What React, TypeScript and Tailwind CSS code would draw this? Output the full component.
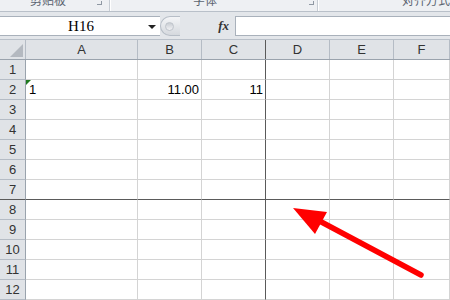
import React from "react";

const cols = [
  { label: "A", w: "w-[112px]" },
  { label: "B", w: "w-[64px]" },
  { label: "C", w: "w-[64px]" },
  { label: "D", w: "w-[64px]" },
  { label: "E", w: "w-[64px]" },
  { label: "F", w: "flex-1" },
];

const hdrFont = { fontFamily: '"Liberation Sans", Arial, sans-serif' };

function Cell({ ci, ri, children }: { ci: number; ri: number; children?: React.ReactNode }) {
  const c = cols[ci];
  const right = ci === 2 ? "border-r-[#5a5a5a]" : "border-r-[#d4d4d4]";
  const bottom = ri === 7 ? "border-b-[#5a5a5a]" : "border-b-[#d4d4d4]";
  return (
    <div className={`${c.w} h-full shrink-0 border-r border-b ${right} ${bottom} relative flex items-center`}>
      {children}
    </div>
  );
}

export default function App() {
  const rows = Array.from({ length: 12 }, (_, i) => i + 1);
  return (
    <div className="relative w-[450px] h-[300px] overflow-hidden bg-white select-none" style={hdrFont}>
      {/* ribbon strip */}
      <div className="h-[12px] flex bg-[#eef0f3] border-b border-[#b9c0c9] overflow-hidden text-[12px] text-[#5b6470]" style={{ fontFamily: '"Noto Sans CJK SC", sans-serif' }}>
        <div className="w-[110px] relative flex">
          <span className="ml-[30px] -mt-[8px] leading-[16px]">剪贴板</span>
          <span className="absolute left-[97px] top-[1px] w-[5px] h-[4px] border-r border-b border-[#8f98a3]" />
        </div>
        <div className="w-px bg-[#c6ccd3]" />
        <div className="w-px bg-white" />
        <div className="w-[208px] relative flex">
          <span className="ml-[82px] -mt-[8px] leading-[16px]">字体</span>
          <span className="absolute left-[198px] top-[1px] w-[5px] h-[4px] border-r border-b border-[#8f98a3]" />
        </div>
        <div className="w-px bg-[#c6ccd3]" />
        <div className="w-px bg-white" />
        <div className="flex-1 flex">
          <span className="ml-[83px] -mt-[8px] leading-[16px] whitespace-nowrap">对齐方式</span>
        </div>
      </div>

      {/* formula bar */}
      <div className="h-[27px] bg-[#e3e6ea] flex items-start pt-[4px]">
        <div className="w-[160px] h-[20px] bg-white border-t border-b border-[#a9b1bb] flex items-center relative">
          <span className="flex-1 text-center text-[15px] leading-none text-black pl-[2px]" style={{ fontFamily: '"Liberation Serif", "Times New Roman", serif' }}>H16</span>
          <span className="absolute left-[148px] top-[8px] w-0 h-0 border-l-[4px] border-r-[4px] border-t-[4px] border-l-transparent border-r-transparent border-t-[#222]" />
        </div>
        <div className="w-[20px] h-[20px] rounded-l-full bg-gradient-to-b from-[#f4f5f7] to-[#d5d9de] border border-r-0 border-[#b7bec7] flex items-center pl-[4px]">
          <span className="w-[9px] h-[9px] rounded-full bg-gradient-to-b from-[#c9cdd3] to-[#f2f3f5] border border-[#bfc4cb]" />
        </div>
        <div className="w-[55px] h-[20px] flex items-center justify-end pr-[6px]">
          <span className="italic font-bold text-[13px] text-[#333]" style={{ fontFamily: '"Liberation Serif", serif' }}>fx</span>
        </div>
        <div className="w-px h-[20px] bg-[#a9b1bb]" />
        <div className="flex-1 h-[20px] bg-white border-t border-b border-[#a9b1bb]" />
      </div>

      {/* column header */}
      <div className="h-[21px] flex bg-[#e0e3e7] border-t border-b border-t-[#b9c0c9] border-b-[#9aa3ad] text-[13px] text-[#333]">
        <div className="w-[26px] h-full border-r border-[#b5bcc5] relative">
          <svg className="absolute right-[2px] bottom-[2px]" width="13" height="13"><polygon points="13,0 13,13 0,13" fill="#b4b9c0" /></svg>
        </div>
        {cols.map((c, i) => (
          <div key={c.label} className={`${c.w} shrink-0 h-full flex items-center justify-center border-r ${i === 2 ? "border-[#5a5a5a]" : "border-[#b5bcc5]"}`}>
            {c.label}
          </div>
        ))}
      </div>

      {/* rows */}
      {rows.map((r) => (
        <div key={r} className="h-[20px] flex text-[13px]">
          <div className={`w-[26px] h-full shrink-0 bg-[#e0e3e7] border-r border-b border-r-[#9aa3ad] ${r === 7 ? "border-b-[#5a5a5a]" : "border-b-[#b5bcc5]"} flex items-center justify-center text-[#333]`}>
            {r}
          </div>
          {cols.map((_, ci) => (
            <Cell key={ci} ci={ci} ri={r}>
              {r === 2 && ci === 0 && (
                <>
                  <svg className="absolute left-0 top-0" width="5" height="5"><polygon points="0,0 5,0 0,5" fill="#1f7a1f" /></svg>
                  <span className="pl-[3px] text-black">1</span>
                </>
              )}
              {r === 2 && ci === 1 && <span className="ml-auto pr-[2px] text-black">11.00</span>}
              {r === 2 && ci === 2 && <span className="ml-auto pr-[2px] text-black">11</span>}
            </Cell>
          ))}
        </div>
      ))}

      {/* red arrow annotation */}
      <svg className="absolute left-0 top-0 pointer-events-none" width="450" height="300">
        <line x1="421" y1="275" x2="312" y2="217" stroke="#ff0000" strokeWidth="5.5" strokeLinecap="round" />
        <polygon points="293,208 327,212 315,234" fill="#ff0000" />
      </svg>
    </div>
  );
}
